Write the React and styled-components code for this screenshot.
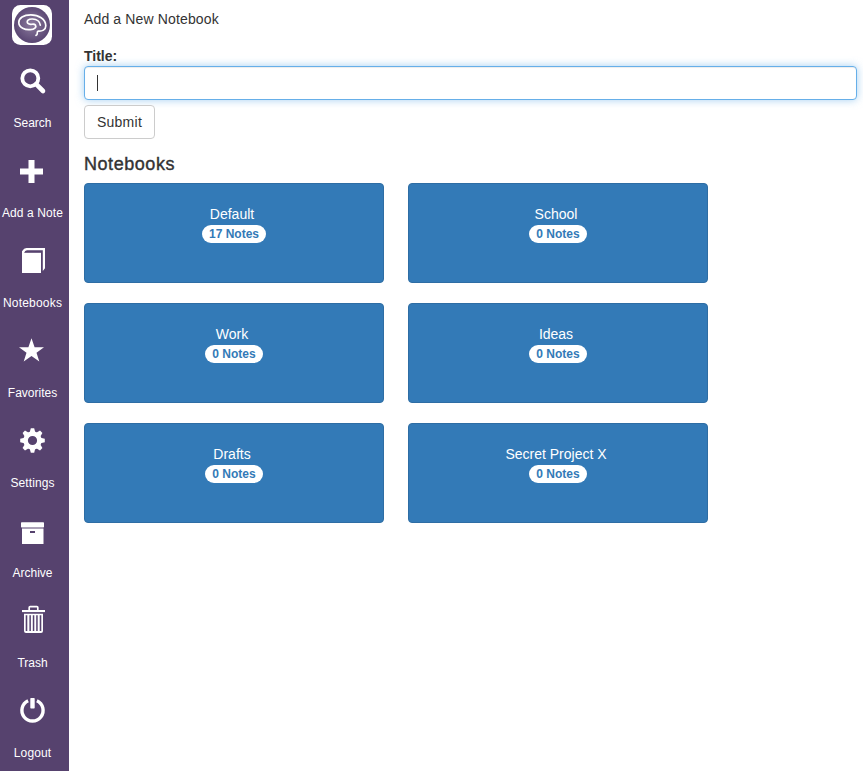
import React from 'react';
import styled, { createGlobalStyle } from 'styled-components';

const GlobalStyle = createGlobalStyle`
  *, *::before, *::after { box-sizing: border-box; }
  body {
    margin: 0;
    background: #fff;
    color: #333;
    font: 14px/20px "Liberation Sans", Arial, sans-serif;
  }
`;

const Page = styled.div`
  display: flex;
  height: 771px;
  overflow: hidden;
`;

const Sidebar = styled.nav`
  flex: 0 0 69px;
  background: #56426e;
  color: #fff;
`;

const LogoLink = styled.div`
  height: 50px;
  padding: 5px 0 0 12px;
  svg { display: block; }
`;

const NavItem = styled.div`
  height: 90px;
`;

const NavIcon = styled.svg`
  display: block;
  width: 69px;
  height: 60px;
  fill: #fff;
`;

const NavLabel = styled.span`
  display: block;
  width: 65px;
  font-size: 12px;
  line-height: 27px;
  letter-spacing: ${(p) => p.$spacing || 0}px;
  text-align: center;
  white-space: nowrap;
`;

const Main = styled.main`
  flex: 1;
  min-width: 0;
  padding: 9px 6px 0 15px;
`;

const Intro = styled.p`
  margin: 0 0 17px;
  letter-spacing: 0.14px;
`;

const FieldLabel = styled.div`
  font-weight: bold;
`;

const Field = styled.div`
  display: flex;
  align-items: center;
  height: 34px;
  padding: 0 12px;
  background: #fff;
  border: 1px solid #66afe9;
  border-radius: 4px;
  box-shadow: inset 0 1px 1px rgba(0, 0, 0, 0.075), 0 0 8px rgba(102, 175, 233, 0.6);
`;

const Caret = styled.span`
  width: 1px;
  height: 16px;
  background: #333;
`;

const SubmitButton = styled.button`
  display: block;
  width: 71px;
  height: 34px;
  margin-top: 5px;
  padding: 0;
  border: 1px solid #ccc;
  border-radius: 4px;
  background: #fff;
  color: #333;
  font: inherit;
  letter-spacing: 0.25px;
`;

const Heading = styled.h4`
  margin: 15px 0 9px;
  font-size: 18px;
  line-height: 20px;
  font-weight: 500;
  -webkit-text-stroke: 0.4px #333;
  letter-spacing: 0.55px;
`;

const Notebooks = styled.div`
  display: grid;
  grid-template-columns: repeat(2, 300px);
  gap: 20px 24px;
`;

const Notebook = styled.div`
  display: flex;
  flex-direction: column;
  align-items: center;
  height: 100px;
  padding: 20px 4px 0 0;
  border: 1px solid #2e6da4;
  border-radius: 4px;
  background: #337ab7;
  color: #fff;
`;

const Badge = styled.span`
  height: 18px;
  margin: 1px 0 0 4px;
  padding: 3px 7px;
  border-radius: 10px;
  background: #fff;
  color: #337ab7;
  font-size: 12px;
  line-height: 12px;
  font-weight: bold;
`;

const gearTeeth = [0, 45, 90, 135, 180, 225, 270, 315];

const items = [
  {
    label: 'Search',
    icon: (
      <>
        <circle cx="30.3" cy="28.3" r="8" fill="none" stroke="#fff" strokeWidth="3.8" />
        <path d="M36.2 34.2L43 41" stroke="#fff" strokeWidth="4.6" strokeLinecap="round" />
      </>
    ),
  },
  {
    label: 'Add a Note',
    spacing: 0.12,
    icon: <path d="M28.5 20h6v8.5H43v6h-8.5V43h-6v-8.5H20v-6h8.5z" />,
  },
  {
    label: 'Notebooks',
    spacing: 0.2,
    icon: (
      <>
        <path d="M22 22.8h19V43H22z" />
        <path d="M22 23.5v-2.3Q24 18 26.5 18H45v20.2L42.8 41V20.2H27Q25 20.2 23.8 23.5z" />
      </>
    ),
  },
  {
    label: 'Favorites',
    icon: <path d="M31.5 18.2l3.1 9H44l-7.5 5.5 2.8 8.9-7.8-5.5-7.8 5.5 2.8-8.9L19 27.2h9.4z" />,
  },
  {
    label: 'Settings',
    spacing: 0.1,
    icon: (
      <>
        <circle cx="32.5" cy="30.5" r="6.9" fill="none" stroke="#fff" strokeWidth="4.6" />
        {gearTeeth.map((a) => (
          <path key={a} d="M29.7 22.4l1.1-4.2h3.4l1.1 4.2z" transform={`rotate(${a} 32.5 30.5)`} />
        ))}
      </>
    ),
  },
  {
    label: 'Archive',
    icon: (
      <>
        <rect x="21" y="22.2" width="23" height="5.2" rx="0.7" />
        <path fillRule="evenodd" d="M22 28.4h21.5V44H22zM30 31v2h5v-2z" />
      </>
    ),
  },
  {
    label: 'Trash',
    icon: (
      <>
        <path d="M29.2 20v-2.4q0-.9.9-.9h6.8q.9 0 .9.9V20" fill="none" stroke="#fff" strokeWidth="1.7" />
        <path d="M22 20h23v2.1H22z" />
        <path
          fillRule="evenodd"
          d="M24 23.7h19V41q0 2-2 2H26q-2 0-2-2zM25.7 25.2V41h1.6V25.2zM29.4 25.2V41h1.5V25.2zM32.8 25.2V41h1.5V25.2zM36.2 25.2V41h1.5V25.2zM39.7 25.2V41h1.6V25.2z"
        />
      </>
    ),
  },
  {
    label: 'Logout',
    spacing: 0.1,
    icon: (
      <>
        <path d="M28.1 20.8A10.6 10.6 0 1 0 36.9 20.8" fill="none" stroke="#fff" strokeWidth="3.4" />
        <rect x="29.2" y="17" width="6.6" height="8" fill="#56426e" />
        <rect x="30.3" y="18" width="4.4" height="10.5" rx="0.7" />
      </>
    ),
  },
];

const notebooks = [
  ['Default', 17],
  ['School', 0],
  ['Work', 0],
  ['Ideas', 0],
  ['Drafts', 0],
  ['Secret Project X', 0],
];

function Logo() {
  return (
    <svg width="40" height="40" viewBox="0 0 40 40">
      <defs>
        <radialGradient id="orb" cx="50%" cy="48%" r="52%">
          <stop offset="0" stopColor="#8d7d9f" />
          <stop offset="1" stopColor="#594572" />
        </radialGradient>
      </defs>
      <rect width="40" height="40" rx="8.5" fill="#fff" />
      <circle cx="20" cy="20" r="18" fill="url(#orb)" />
      <path
        d="M24 30.4C26.6 29.8 24 26.8 26.2 26.1C30 26.4 33.8 25 33.8 20.8C33.7 13.8 26.5 9.8 18.8 9.8C11.5 9.8 6.8 13 6.8 17.4C6.8 22.5 13.3 25.2 18.3 24.6C22.5 24.3 24.8 22.2 23.4 20C21.8 17.8 18.3 20.7 16 18.4C13.8 16 16.8 13.8 20.5 14C25 14.2 28 17 28.3 20.2"
        fill="none"
        stroke="#fff"
        strokeWidth="1.7"
        strokeLinecap="round"
      />
    </svg>
  );
}

export default function App() {
  return (
    <>
      <GlobalStyle />
      <Page>
        <Sidebar>
          <LogoLink>
            <Logo />
          </LogoLink>
          {items.map(({ label, icon, spacing }) => (
            <NavItem key={label}>
              <NavIcon viewBox="0 0 69 60">{icon}</NavIcon>
              <NavLabel $spacing={spacing}>{label}</NavLabel>
            </NavItem>
          ))}
        </Sidebar>
        <Main>
          <Intro>Add a New Notebook</Intro>
          <FieldLabel>Title:</FieldLabel>
          <Field role="textbox" aria-label="Title">
            <Caret />
          </Field>
          <SubmitButton type="button">Submit</SubmitButton>
          <Heading>Notebooks</Heading>
          <Notebooks>
            {notebooks.map(([name, count]) => (
              <Notebook key={name}>
                <span>{name}</span>
                <Badge>{count} Notes</Badge>
              </Notebook>
            ))}
          </Notebooks>
        </Main>
      </Page>
    </>
  );
}
